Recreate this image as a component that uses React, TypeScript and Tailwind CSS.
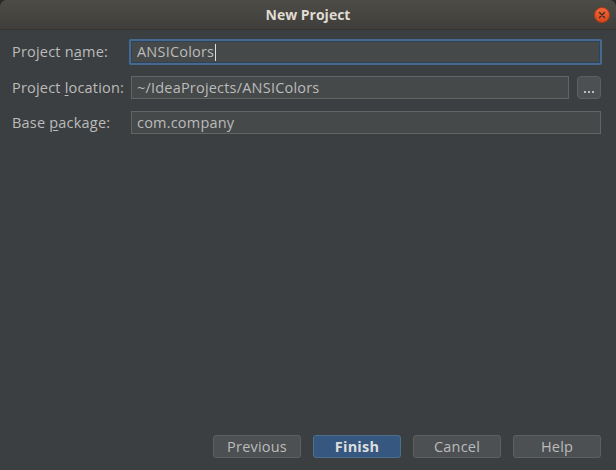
export default function App() {
  const font = { fontFamily: '"Open Sans", "DejaVu Sans", sans-serif' }
  return (
    <div className="w-[616px] h-[470px] bg-[#2b2b2b] overflow-hidden" style={font}>
      <div className="w-full h-full flex flex-col bg-[#3c3f41] rounded-t-[7px] overflow-hidden">
        {/* title bar */}
        <div className="h-[30px] relative flex items-center justify-center bg-gradient-to-b from-[#4e4c47] to-[#403e3a] border-b border-[#353431]">
          <span className="text-[14px] font-bold text-[#dfdbd2]">New Project</span>
          <div className="absolute right-[6px] top-[7px] w-[16px] h-[16px] rounded-full bg-gradient-to-b from-[#f0673a] to-[#d8471a] border border-[#b03c14] flex items-center justify-center">
            <svg width="8" height="8" viewBox="0 0 8 8">
              <path d="M1.5 1.5 L6.5 6.5 M6.5 1.5 L1.5 6.5" stroke="#3a2a24" strokeWidth="1.3" strokeLinecap="round" />
            </svg>
          </div>
        </div>

        {/* form */}
        <div className="flex flex-col text-[14.5px] tracking-[0.2px] text-[#bbbbbb]">
          <div className="flex items-center mt-[9px] pl-3">
            <div className="w-[117px]">Project n<span className="underline underline-offset-2">a</span>me:</div>
            <div className="flex-1 mr-[14px] h-[26px] border-2 border-[#46698f] rounded-[2px] bg-[#45494a] flex items-center pl-[6px] shadow-[inset_0_0_0_1px_#2f4257]">
              <span>ANSIColors</span>
              <span className="w-px h-[17px] bg-[#dddddd] ml-px" />
            </div>
          </div>

          <div className="flex items-center mt-[11px] pl-3 pr-[15px]">
            <div className="w-[119px]">Project <span className="underline underline-offset-2">l</span>ocation:</div>
            <div className="flex-1 h-[23px] border border-[#646464] bg-[#45494a] flex items-center pl-[5px]">~/IdeaProjects/ANSIColors</div>
            <div className="ml-[8px] w-[24px] h-[23px] rounded-[4px] bg-[#4c5052] border border-[#5e6060] flex items-end justify-center pb-[5px] gap-[2px]">
              <span className="w-[2px] h-[2px] bg-[#bbbbbb]" />
              <span className="w-[2px] h-[2px] bg-[#bbbbbb]" />
              <span className="w-[2px] h-[2px] bg-[#bbbbbb]" />
            </div>
          </div>

          <div className="flex items-center mt-[12px] pl-3 pr-[15px]">
            <div className="w-[119px]">Base <span className="underline underline-offset-2">p</span>ackage:</div>
            <div className="flex-1 h-[23px] border border-[#646464] bg-[#45494a] flex items-center pl-[5px]">com.company</div>
          </div>
        </div>

        <div className="flex-1" />

        {/* buttons */}
        <div className="flex justify-end gap-3 pr-[15px] pb-3 text-[14.5px] tracking-[0.2px]">
          <button className="w-[88px] h-[23px] rounded-[3px] bg-[#4c5052] border border-[#5e6060] text-[#bbbbbb]">Previous</button>
          <button className="w-[88px] h-[23px] rounded-[3px] bg-[#365880] border border-[#4c708c] text-[#dddddd] font-bold">Finish</button>
          <button className="w-[88px] h-[23px] rounded-[3px] bg-[#4c5052] border border-[#5e6060] text-[#bbbbbb]">Cancel</button>
          <button className="w-[88px] h-[23px] rounded-[3px] bg-[#4c5052] border border-[#5e6060] text-[#bbbbbb]">Help</button>
        </div>
      </div>
    </div>
  )
}
